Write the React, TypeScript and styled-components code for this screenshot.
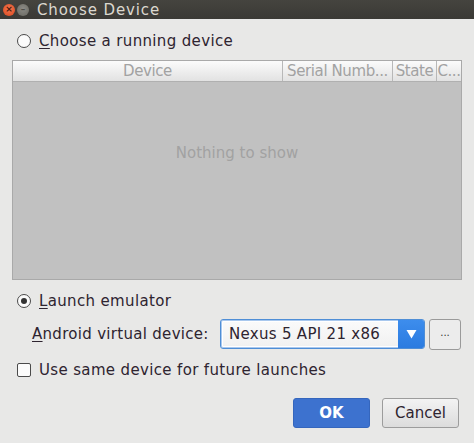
import React from "react";
import styled, { createGlobalStyle } from "styled-components";

const Global = createGlobalStyle`
  html, body { margin: 0; padding: 0; background: #e8e8e7; }
  body { font-family: "DejaVu Sans", "Open Sans", sans-serif; }
`;

const Window = styled.div`
  width: 474px;
  height: 443px;
  background: #e8e8e7;
  display: flex;
  flex-direction: column;
  overflow: hidden;
  color: #2e2430;
`;

const TitleBar = styled.div`
  height: 19px;
  background: linear-gradient(#45443f, #3a3935);
  display: flex;
  align-items: center;
  padding-left: 3px;
  gap: 2px;
`;

const WinBtn = styled.div<{ $close?: boolean }>`
  width: 12px;
  height: 12px;
  border-radius: 50%;
  background: ${(p) =>
    p.$close
      ? "radial-gradient(circle at 50% 40%, #f5764f, #d9481f)"
      : "radial-gradient(circle at 50% 40%, #8c8b86, #68675f)"};
  display: flex;
  align-items: center;
  justify-content: center;
  font-size: 9px;
  line-height: 1;
  color: ${(p) => (p.$close ? "#4a1a0c" : "#4e4d48")};
  font-weight: bold;
  font-family: "DejaVu Sans", sans-serif;
`;

const Title = styled.div`
  margin-left: 6px;
  color: #dcd8cf;
  font-size: 15px;
  letter-spacing: 0.9px;
`;

const Content = styled.div`
  display: flex;
  flex-direction: column;
  padding: 12px 12px 0 12px;
`;

const OptionRow = styled.label`
  display: flex;
  align-items: center;
  height: 20px;
  padding-left: 5px;
  gap: 8px;
  font-size: 15px;
  letter-spacing: 0.35px;
`;

const Radio = styled.span<{ $checked?: boolean }>`
  width: 12px;
  height: 12px;
  border-radius: 50%;
  border: 1px solid #4a4a4a;
  background: #fbfbfb;
  display: flex;
  align-items: center;
  justify-content: center;
  &::after {
    content: "";
    display: ${(p) => (p.$checked ? "block" : "none")};
    width: 6px;
    height: 6px;
    border-radius: 50%;
    background: #333;
  }
`;

const Check = styled.span`
  width: 12px;
  height: 12px;
  border-radius: 2px;
  border: 1px solid #4a4a4a;
  background: #fbfbfb;
`;

const U = styled.span`
  text-decoration: underline;
  text-underline-offset: 2px;
`;

const Table = styled.div`
  margin-top: 9px;
  height: 220px;
  border: 1px solid #a9a9a9;
  display: flex;
  flex-direction: column;
  box-sizing: border-box;
`;

const Header = styled.div`
  height: 20px;
  display: grid;
  grid-template-columns: 269px 110px 44px 1fr;
  background: linear-gradient(#fbfbfb, #e2e2e2);
  border-bottom: 1px solid #b0b0b0;
  font-size: 15px;
  color: #a2a2a2;
`;

const HeadCell = styled.div<{ $sep?: boolean }>`
  display: flex;
  align-items: center;
  justify-content: center;
  overflow: hidden;
  white-space: nowrap;
  letter-spacing: -0.4px;
  border-left: ${(p) => (p.$sep ? "1px solid #b8b8b8" : "none")};
`;

const Body = styled.div`
  flex: 1;
  background: #c1c1c1;
  display: flex;
  align-items: center;
  justify-content: center;
  padding-bottom: 56px;
  font-size: 15px;
  color: #a2a2a2;
`;

const Gap = styled.div<{ $h: number }>`
  height: ${(p) => p.$h}px;
  flex: none;
`;

const AvdRow = styled.div`
  display: flex;
  align-items: center;
  height: 32px;
  padding-left: 20px;
  font-size: 15px;
  letter-spacing: 0.3px;
`;

const AvdLabel = styled.div`
  width: 188px;
  white-space: nowrap;
`;

const Combo = styled.div`
  width: 205px;
  height: 30px;
  box-sizing: border-box;
  border: 1px solid #4f8ed6;
  border-radius: 3px;
  box-shadow: 0 0 0 1px #a9c8ee inset;
  background: #fff;
  display: flex;
  overflow: hidden;
`;

const ComboText = styled.div`
  flex: 1;
  display: flex;
  align-items: center;
  padding-left: 6px;
  font-size: 15px;
  white-space: nowrap;
  background: linear-gradient(#fafafa, #f1f1f1);
  margin: 2px 0 2px 2px;
`;

const ComboArrow = styled.div`
  width: 26px;
  background: linear-gradient(#3d8ded, #2b7be0);
  display: flex;
  align-items: center;
  justify-content: center;
`;

const DotsBtn = styled.div`
  margin-left: 4px;
  width: 32px;
  height: 31px;
  box-sizing: border-box;
  border: 1px solid #9a9a9a;
  border-radius: 3px;
  background: #ececec;
  display: flex;
  align-items: center;
  justify-content: center;
  font-size: 10px;
  letter-spacing: 0;
  padding-bottom: 3px;
  color: #333;
`;

const Footer = styled.div`
  display: flex;
  justify-content: flex-end;
  gap: 12px;
  padding-right: 3px;
`;

const Button = styled.div<{ $primary?: boolean }>`
  width: 77px;
  height: 30px;
  box-sizing: border-box;
  border-radius: 3px;
  display: flex;
  align-items: center;
  justify-content: center;
  font-size: 15px;
  ${(p) =>
    p.$primary
      ? `background: #3d72cf; border: 1px solid #3566bd; color: #fff; font-weight: 700;`
      : `background: linear-gradient(#f3f3f3, #dcdcdc); border: 1px solid #9c9c9c; color: #2e2430;`}
`;

export default function App() {
  return (
    <>
      <Global />
      <Window>
        <TitleBar>
          <WinBtn $close>×</WinBtn>
          <WinBtn>–</WinBtn>
          <Title>Choose Device</Title>
        </TitleBar>
        <Content>
          <OptionRow>
            <Radio />
            <span>
              <U>C</U>hoose a running device
            </span>
          </OptionRow>
          <Table>
            <Header>
              <HeadCell>Device</HeadCell>
              <HeadCell $sep>Serial Numb...</HeadCell>
              <HeadCell $sep>State</HeadCell>
              <HeadCell $sep>C...</HeadCell>
            </Header>
            <Body>Nothing to show</Body>
          </Table>
          <Gap $h={11} />
          <OptionRow>
            <Radio $checked />
            <span>
              <U>L</U>aunch emulator
            </span>
          </OptionRow>
          <Gap $h={7} />
          <AvdRow>
            <AvdLabel>
              <U>A</U>ndroid virtual device:
            </AvdLabel>
            <Combo>
              <ComboText>Nexus 5 API 21 x86</ComboText>
              <ComboArrow>
                <svg width="11" height="10" viewBox="0 0 11 10">
                  <path d="M0.5 1 L10.5 1 L5.5 9.5 Z" fill="#fff" />
                </svg>
              </ComboArrow>
            </Combo>
            <DotsBtn>...</DotsBtn>
          </AvdRow>
          <Gap $h={10} />
          <OptionRow>
            <Check />
            <span>Use same device for future launches</span>
          </OptionRow>
          <Gap $h={18} />
          <Footer>
            <Button $primary>OK</Button>
            <Button>Cancel</Button>
          </Footer>
        </Content>
      </Window>
    </>
  );
}
